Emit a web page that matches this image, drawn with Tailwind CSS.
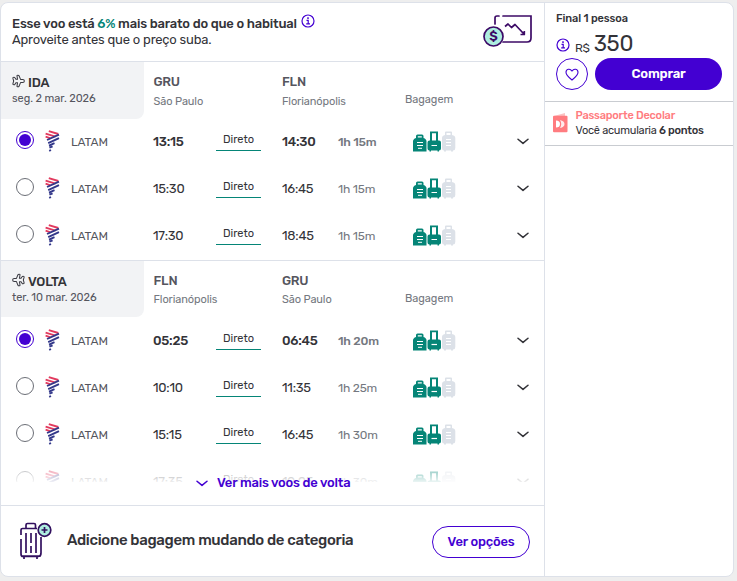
<!DOCTYPE html>
<html lang="pt-BR">
<head>
  <meta charset="UTF-8">
  <meta name="viewport" content="width=device-width, initial-scale=1.0">
  <title>Voos - Decolar</title>
  <script src="https://cdn.jsdelivr.net/npm/@tailwindcss/browser@4"></script>
</head>
<body class="bg-[#eeeeee] font-[Rubik,Roboto,sans-serif] text-[#333338] h-[581px] overflow-hidden pt-0.5">
  <!-- Símbolos reutilizados -->
  <svg class="hidden">
    <symbol id="info" viewBox="0 0 14 14">
      <circle cx="7" cy="7" r="6" fill="none" stroke="#4300d2" stroke-width="1.2"/>
      <path d="M5.5 6.3H7.2V9.8M5.2 9.9H9" fill="none" stroke="#4300d2" stroke-width="1.2"/>
      <rect x="6.2" y="3.3" width="1.6" height="1.6" fill="#4300d2"/>
    </symbol>
    <symbol id="plane" viewBox="0 0 14 14">
      <path d="M13.3 7C13.3 5.9 12.5 5.3 11.6 5.3H9.2L7.6 1.4Q7.3 .7 6.4 .7Q5.2 .7 5.4 1.8L6 5.2H4.2L3.2 3.6Q2.9 3 2 3Q.7 3 1 4.2L1.8 7L1 9.8Q.7 11 2 11Q2.900 11 3.200 10.400L4.200 8.800H6L5.400 12.200Q5.200 13.300 6.400 13.300Q7.300 13.300 7.600 12.600L9.200 8.700H11.600C12.500 8.700 13.300 8.100 13.300 7Z" fill="none" stroke="#3a3a42" stroke-width="1.1" stroke-linejoin="round"/>
    </symbol>
    <symbol id="latam" viewBox="0 0 15 22">
      <path d="M3.800 1.200L13.300 4M.6 3.700L10.500 6.700M.6 6.700L5.500 8.300" stroke="#e23a5e" stroke-width="1.9" fill="none"/>
      <path d="M14 4.600L2 10M14 8.200L3.200 13.200M9.500 13.200L4 15.600M7.600 16.300L4.400 17.700M6 20L4.200 20.800" stroke="#33388a" stroke-width="1.9" fill="none"/>
    </symbol>
    <symbol id="bags" viewBox="0 0 43 21">
      <path d="M3 7V5Q3 3.500 4.500 3.500H9Q10.500 3.500 10.500 5V7Q13.500 8 13.500 10.500V20.500H0V10.500Q0 8 3 7ZM4.800 5.200V6.500H8.800V5.200Z" fill="#058577" fill-rule="evenodd"/>
      <path d="M4 11.500H10M4 14.500H10M5 17.300H9" stroke="#fff" stroke-width="1"/>
      <path d="M17 .5H25V9.500H26Q28 9.500 28 11.500V17.500Q28 19.500 26 19.500V20.500H24.500V19.500H18V20.500H16.500V19.500Q14.500 19.500 14.500 17.500V11.500Q14.500 9.500 16.500 9.500H17ZM19 2.300V9.500H23V2.300Z" fill="#058577" fill-rule="evenodd"/>
      <path d="M18.500 14.500H24" stroke="#fff" stroke-width="1.2"/>
      <path d="M32 4V1.500Q32 .5 33 .5H38Q39 .5 39 1.500V4Q42.300 4.500 42.300 7V17Q42.300 19.500 40 19.500V20.500H38V19.500H33V20.500H31V19.500Q29 19.500 29 17V7Q29 4.500 32 4ZM33.500 2V4H37.500V2Z" fill="#dce1e8" fill-rule="evenodd"/>
      <path d="M33 8.500H38M33 11.500H38M33 14.500H38" stroke="#fff" stroke-width="1"/>
    </symbol>
    <symbol id="chevron" viewBox="0 0 12 7">
      <path d="M1 1.2L6 5.400L11 1.200" fill="none" stroke="currentColor" stroke-width="1.5" stroke-linecap="round" stroke-linejoin="round"/>
    </symbol>
  </svg>

  <main class="flex w-[734px] h-[575px] bg-white border border-[#dde1e9] rounded-lg overflow-hidden">
    <section class="w-[544px] h-full border-r border-[#dde1e9] flex flex-col">
      <!-- Aviso de preço -->
      <header class="h-[59px] shrink-0 border-b border-[#dde1e9] pl-[11px] pr-[11px] flex justify-between">
        <div class="pt-[13px] text-[13px] leading-[16px] whitespace-nowrap">
          <p class="flex font-medium"><span class="tracking-[-0.19px]">Esse voo está <span class="text-[#058577]">6%</span> mais barato do que o habitual</span><svg class="w-[14px] h-[14px] ml-1 -mt-0.5"><use href="#info"/></svg></p>
          <p class="tracking-[-0.19px]">Aproveite antes que o preço suba.</p>
        </div>
        <svg class="w-[50px] h-[34px] mt-[11px]" viewBox="0 0 50 34" fill="none" stroke="#3c0a66" stroke-width="1.7">
          <path d="M12 10V4Q12 2 14 2H16M20 2H48V24Q48 28 44 28H20" stroke-linecap="round"/>
          <path d="M22 12.5L25 10L28.5 13.5L32 10.5L40.5 19.5M37.5 20.5H41.3V17" stroke-linejoin="round"/>
          <circle cx="10.500" cy="22.500" r="9.500" fill="#aeeee0"/>
          <text x="10.500" y="27" text-anchor="middle" font-size="13" font-weight="600" fill="#3c0a66" stroke="none">$</text>
        </svg>
      </header>

      <!-- Ida -->
      <div class="h-[199px] shrink-0 border-b border-[#dde1e9]">
        <div class="grid grid-cols-[152.500px_128.500px_123px_1fr] h-[57px]">
          <div class="w-[143px] bg-[#f2f3f5] rounded-br-lg pl-[11px] pt-[12px]">
            <div class="flex items-center gap-[3px] h-[17px]"><svg class="w-[13px] h-[14px] -mt-[3px]"><use href="#plane"/></svg><span class="text-[13px] font-medium tracking-[-0.2px]">IDA</span></div>
            <p class="text-[11px] leading-[15px] text-[#55555e] tracking-[-0.05px]">seg. 2 mar. 2026</p>
          </div>
          <div class="pt-[12px]"><p class="text-[13px] leading-[16px] font-medium text-[#55555e] tracking-[-0.3px]">GRU</p><p class="text-[11px] leading-[15px] mt-1 text-[#747880] tracking-[-0.1px]">São Paulo</p></div>
          <div class="pt-[12px]"><p class="text-[13px] leading-[16px] font-medium text-[#55555e] tracking-[-0.2px]">FLN</p><p class="text-[11px] leading-[15px] mt-1 text-[#747880] tracking-[-0.1px]">Florianópolis</p></div>
          <p class="pt-[30px] text-[11px] leading-[15px] text-[#747880] tracking-[-0.05px]">Bagagem</p>
        </div>
        <div id="ida" class="-mt-px"></div>
      </div>

      <!-- Volta -->
      <div class="relative h-[245px] shrink-0 border-b border-[#dde1e9]">
        <div class="grid grid-cols-[152.500px_128.500px_123px_1fr] h-[57px]">
          <div class="w-[143px] h-[56px] bg-[#f2f3f5] rounded-br-lg pl-[11px] pt-[12px]">
            <div class="flex items-center gap-[3px] h-[17px]"><svg class="w-[13px] h-[14px] -mt-[3px] -scale-x-100"><use href="#plane"/></svg><span class="text-[13px] font-medium tracking-[-0.2px]">VOLTA</span></div>
            <p class="text-[11px] leading-[15px] text-[#55555e] tracking-[-0.05px]">ter. 10 mar. 2026</p>
          </div>
          <div class="pt-[12px]"><p class="text-[13px] leading-[16px] font-medium text-[#55555e] tracking-[-0.2px]">FLN</p><p class="text-[11px] leading-[15px] mt-[3px] text-[#747880] tracking-[-0.1px]">Florianópolis</p></div>
          <div class="pt-[12px]"><p class="text-[13px] leading-[16px] font-medium text-[#55555e] tracking-[-0.3px]">GRU</p><p class="text-[11px] leading-[15px] mt-[3px] text-[#747880] tracking-[-0.1px]">São Paulo</p></div>
          <p class="pt-[30px] text-[11px] leading-[15px] text-[#747880] tracking-[-0.05px]">Bagagem</p>
        </div>
        <div id="volta" class="-mt-px h-[165px] overflow-hidden"></div>
        <!-- Degradê sobre a última linha -->
        <div class="absolute left-0 right-0 top-[200px] h-[24px] bg-linear-to-b from-white/35 to-white"></div>
        <button class="absolute left-[195px] top-[213px] flex items-center gap-[9px] h-[18px] text-[#4300d2] text-[13px] font-medium whitespace-nowrap">
          <svg class="w-[12px] h-[7px]"><use href="#chevron"/></svg><span class="tracking-[-0.2px]">Ver mais voos de volta</span>
        </button>
      </div>

      <!-- Bagagem extra -->
      <footer class="flex-1 flex items-center pl-[18px] pr-[14px]">
        <svg class="w-[34px] h-[40px]" viewBox="0 0 34 40" fill="none" stroke="#32105f" stroke-width="1.700">
          <path d="M7 7V4Q7 2.500 8.500 2.500H15Q16.500 2.500 16.500 4V7M2 14V9Q2 7.500 3.500 7.500H18M2 18V33Q2 35.500 4 35.500H19Q22 35.500 22 32V16M2 35H22M5 36V38M18 36V38"/>
          <path d="M7 12V32M12 12V22M12 25V32M17 12V32"/>
          <circle cx="25.500" cy="9" r="6.300" fill="#aeeee0"/>
          <path d="M25.500 6V12M22.500 9H28.500"/>
        </svg>
        <p class="ml-[14px] -mt-0.5 text-[15px] font-medium tracking-[-0.33px] whitespace-nowrap flex-1">Adicione bagagem mudando de categoria</p>
        <button class="w-[98px] h-8 mt-px rounded-full border border-[#4300d2] text-[#4300d2] text-[13px] font-medium tracking-[-0.2px]">Ver opções</button>
      </footer>
    </section>

    <!-- Preço final -->
    <aside class="flex-1">
      <div class="h-[99px] border-b border-[#c9ccd1] pl-[11px] pr-[11px] pt-[8px]">
        <p class="text-[11px] leading-[16px] font-medium tracking-[-0.1px]">Final 1 pessoa</p>
        <div class="flex items-baseline h-[30px] whitespace-nowrap">
          <svg class="w-[14px] h-[14px] self-center mt-[5px]"><use href="#info"/></svg>
          <span class="ml-[5px] text-[12px] tracking-[-0.3px] relative top-px">R$</span>
          <span class="ml-[4px] text-[22px] leading-[34px] tracking-[-0.3px]">350</span>
        </div>
        <div class="flex gap-[7px] mt-[1px]">
          <button class="w-8 h-8 rounded-full border border-[#4300d2] flex items-center justify-center">
            <svg class="w-[14px] h-[13px]" viewBox="0 0 14 13"><path d="M7 12C4.500 10 1 7.500 1 4.300C1 1 5 0 7 3C9 0 13 1 13 4.300C13 7.500 9.500 10 7 12Z" fill="none" stroke="#4300d2" stroke-width="1.100"/></svg>
          </button>
          <button class="flex-1 h-8 rounded-full bg-[#4300d2] text-white text-[13px] font-semibold tracking-[-0.2px]">Comprar</button>
        </div>
      </div>
      <div class="h-[44px] border-b border-[#c9ccd1] flex pl-[8px] pt-[6px] whitespace-nowrap text-[11px] leading-[15px]">
        <svg class="w-[15px] h-[20px] mt-[5px]" viewBox="0 0 15 20">
          <path d="M1 3L12 0V4H1Z" fill="#fbc3c3"/>
          <rect y="2.800" width="14.500" height="16.500" rx="1" fill="#ff7c80"/>
          <path d="M3 7.500Q7 7.500 7 11T3 14.500Z" fill="#fff"/>
          <path d="M7 7Q11.500 8 11.500 11T7 15Q9.500 11 7 7Z" fill="#fff" opacity=".85"/>
        </svg>
        <div class="ml-[7.500px]">
          <p class="font-medium text-[#ff7c80] tracking-[-0.22px]">Passaporte Decolar</p>
          <p class="tracking-[-0.24px]">Você acumularia <span class="font-medium">6 pontos</span></p>
        </div>
      </div>
    </aside>
  </main>

  <script>
    const voos = {
      ida: [
        ['13:15', '14:30', '1h 15m'],
        ['15:30', '16:45', '1h 15m'],
        ['17:30', '18:45', '1h 15m']
      ],
      volta: [
        ['05:25', '06:45', '1h 20m'],
        ['10:10', '11:35', '1h 25m'],
        ['15:15', '16:45', '1h 30m'],
        ['17:35', '19:05', '1h 30m']
      ]
    };

    // O primeiro voo de cada trecho fica selecionado
    Object.keys(voos).forEach(trecho => {
      document.getElementById(trecho).innerHTML = voos[trecho].map(([saida, chegada, duracao], i) => `
        <div class="grid grid-cols-[29px_26px_82px_63px_66px_56px_75px_104px_1fr] items-center h-[47px] pl-[15px] text-[13px] whitespace-nowrap">
          <span class="w-[18px] h-[18px] -mt-[3px] rounded-full border flex items-center justify-center ${i ? 'border-[#6b6e76]' : 'border-[#4300d2]'}">
            ${i ? '' : '<i class="w-[12px] h-[12px] rounded-full bg-[#4300d2]"></i>'}
          </span>
          <svg class="w-[15px] h-[22px] -mt-px"><use href="#latam"/></svg>
          <span class="text-[12px] text-[#55555e] tracking-[-0.15px]">LATAM</span>
          <span class="tracking-[-0.25px] ${i ? '' : 'font-medium'}">${saida}</span>
          <span class="w-[45px] h-[19px] -mt-px border-b border-[#058577] text-[11px] leading-[15px] text-center">Direto</span>
          <span class="tracking-[-0.25px] ${i ? '' : 'font-medium'}">${chegada}</span>
          <span class="text-[12px] tracking-[-0.2px] text-[#747880] ${i ? '' : 'font-medium'}">${duracao}</span>
          <svg class="w-[43px] h-[21px]"><use href="#bags"/></svg>
          <svg class="w-[12px] h-[7px]"><use href="#chevron"/></svg>
        </div>
      `).join('');
    });
  </script>
</body>
</html>
